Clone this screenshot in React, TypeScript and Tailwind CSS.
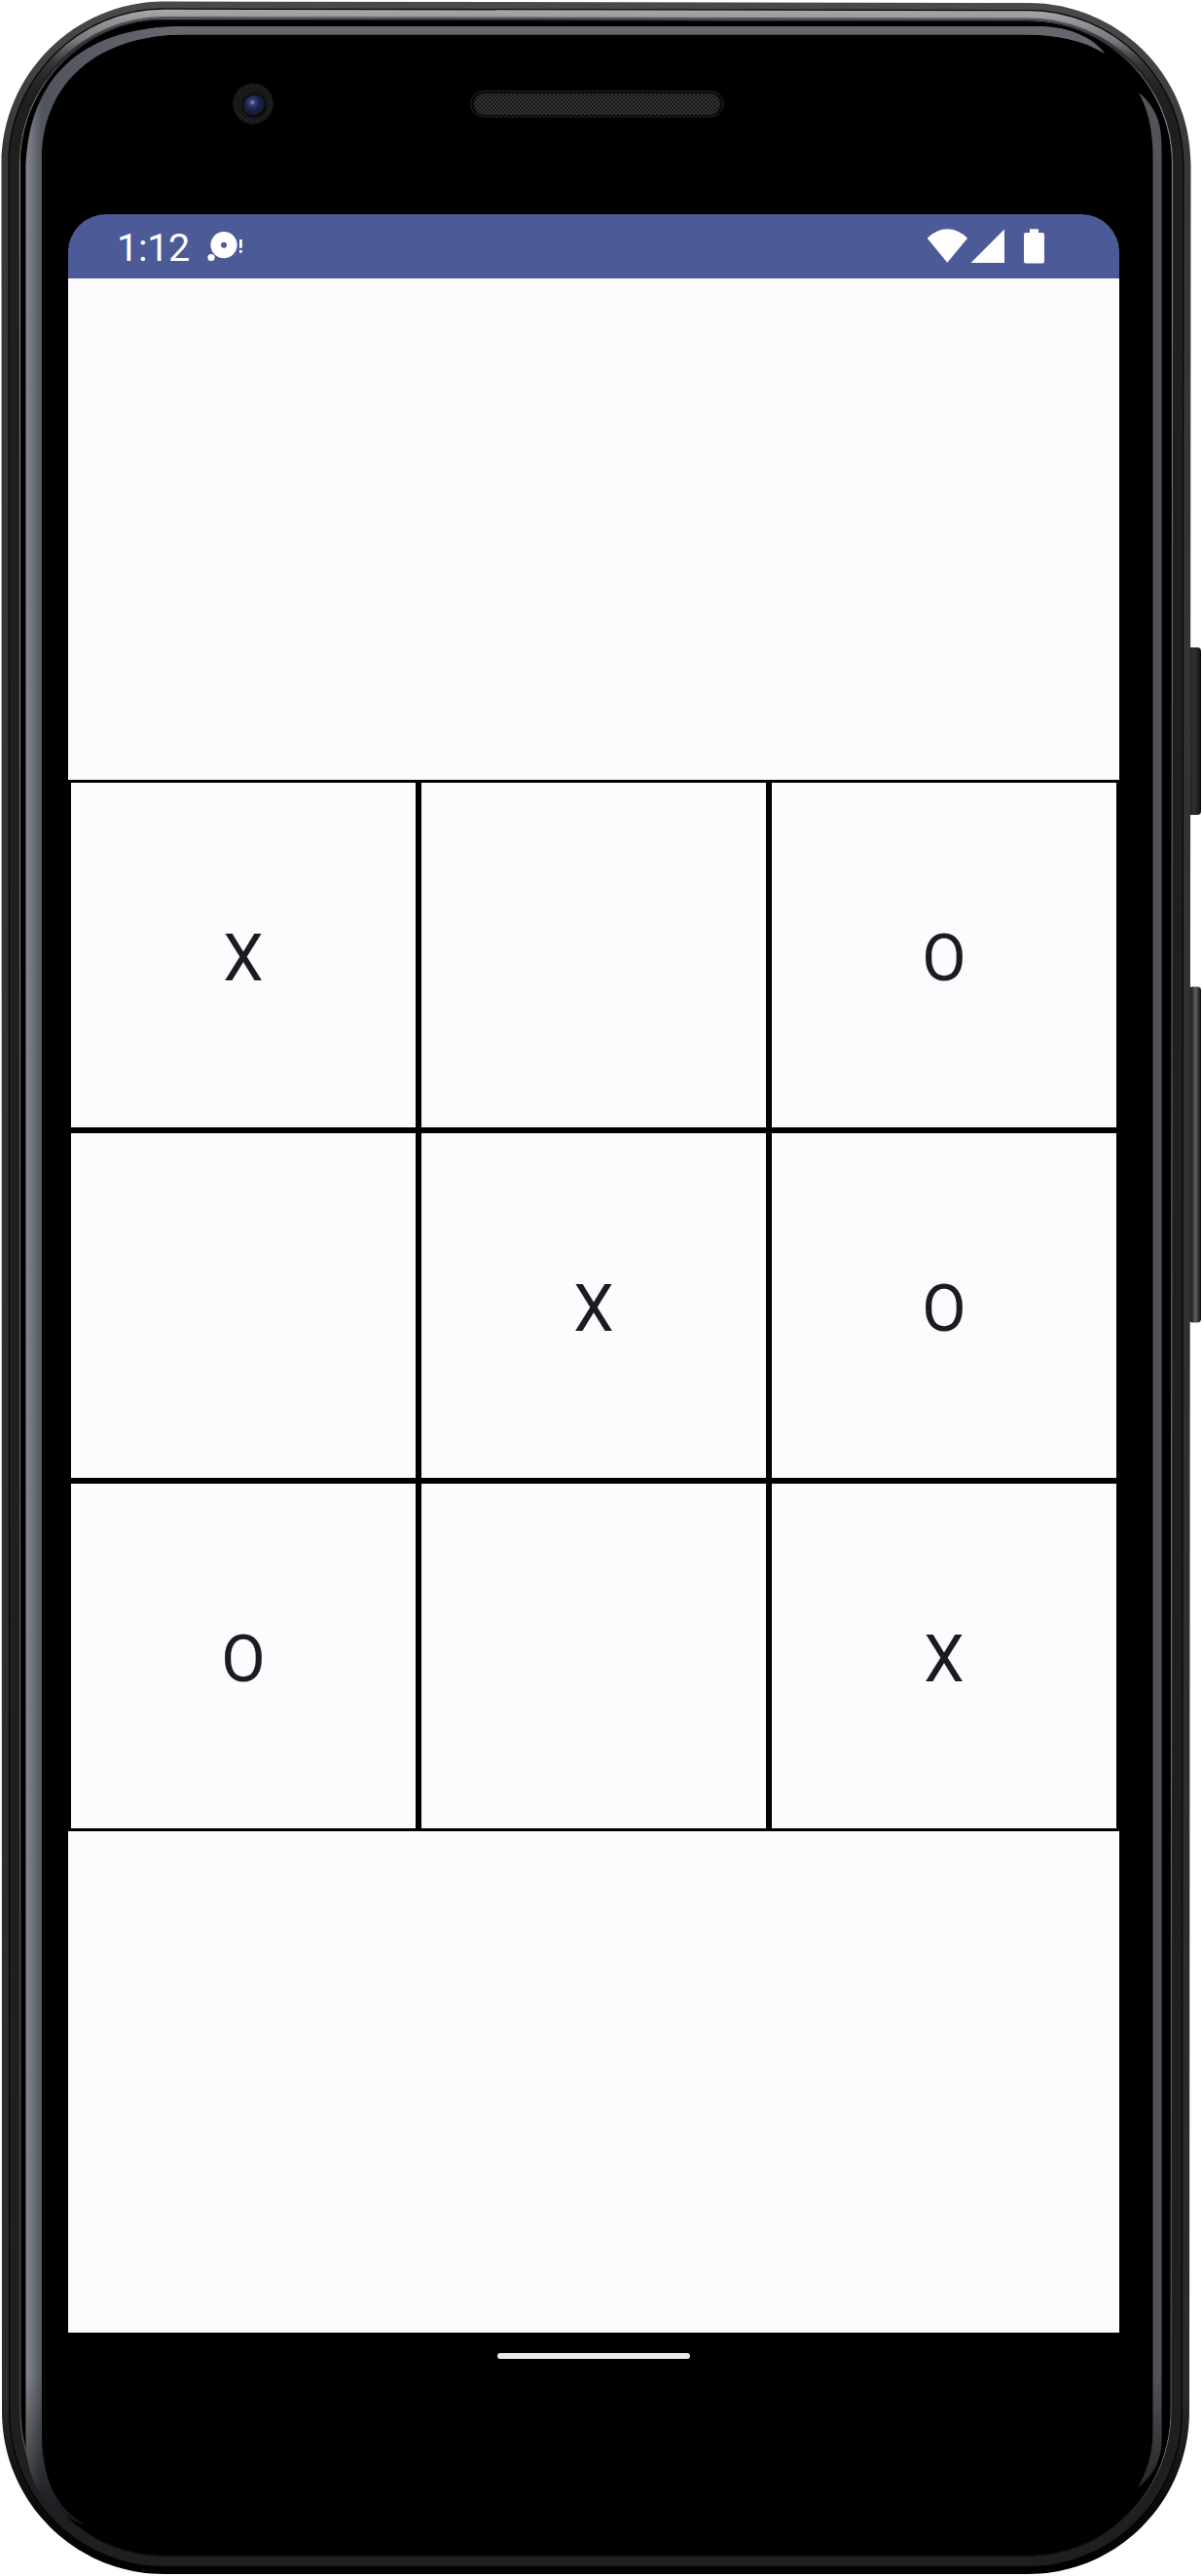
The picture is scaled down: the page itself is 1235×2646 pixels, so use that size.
const board = ["X", "", "O", "", "X", "O", "O", "", "X"];

// Outline of the phone body, shrunk by `i` pixels on each side.
function body(i: number) {
  const l = 1.5 + i;
  const r = 1223.5 - i;
  const t = 1.5 + i;
  const b = 2644 - i;
  const c = 167 - i;
  const k = c * 0.45;
  return [
    `M${l} ${t + c}`,
    `C${l} ${t + k} ${l + k} ${t} ${l + c} ${t}`,
    `L${r - c} ${t + 1.5}`,
    `C${r - k} ${t + 1.5} ${r} ${t + k} ${r} ${t + c}`,
    `L${r - 1.5} ${b - c}`,
    `C${r - 1.5} ${b - k} ${r - k} ${b} ${r - c} ${b}`,
    `L${l + c} ${b}`,
    `C${l + k} ${b} ${l + 0.5} ${b - k} ${l + 0.5} ${b - c}Z`,
  ].join("");
}

const leftGlass =
  "M26.5 180C26.5 85 78 27 190 27H1064C1096 27 1122 37 1135 55C1113 41 1085 35.5 1050 35.5H190C98 35.5 43 87 43 164V2500C43 2545 56 2575 86 2593C45 2577 26.5 2547 26.5 2505Z";
const rightGlass =
  "M1170 95C1188 110 1193.5 127 1193.5 150V2505C1193.5 2528 1184 2544 1169 2555C1180 2535 1184.5 2520 1184.5 2495V160C1184.5 135 1180 114 1170 95Z";

function Frame() {
  return (
    <svg className="absolute inset-0" width="1235" height="2646" viewBox="0 0 1235 2646" fill="none" aria-hidden="true">
      <defs>
        <linearGradient id="shell" gradientUnits="userSpaceOnUse" x1="0" y1="0" x2="0" y2="2646">
          <stop offset="0" stopColor="#4a4a4a" />
          <stop offset="0.06" stopColor="#393637" />
          <stop offset="0.93" stopColor="#2b292a" />
          <stop offset="0.975" stopColor="#080808" />
          <stop offset="1" stopColor="#000" />
        </linearGradient>
        <linearGradient id="silver" gradientUnits="userSpaceOnUse" x1="0" y1="8" x2="0" y2="105">
          <stop offset="0" stopColor="#a9abaf" />
          <stop offset="0.12" stopColor="#96989c" />
          <stop offset="0.35" stopColor="#77797d" />
          <stop offset="0.6" stopColor="#38393b" stopOpacity="0.8" />
          <stop offset="1" stopColor="#222" stopOpacity="0" />
        </linearGradient>
        <linearGradient id="silverLow" gradientUnits="userSpaceOnUse" x1="0" y1="15" x2="0" y2="90">
          <stop offset="0" stopColor="#56585b" />
          <stop offset="0.4" stopColor="#37383a" />
          <stop offset="1" stopColor="#222" stopOpacity="0" />
        </linearGradient>
        <linearGradient id="hairline" gradientUnits="userSpaceOnUse" x1="0" y1="0" x2="0" y2="2646">
          <stop offset="0.008" stopColor="#1b1b1c" />
          <stop offset="0.04" stopColor="#858688" />
          <stop offset="0.95" stopColor="#66676a" />
          <stop offset="0.985" stopColor="#111" />
        </linearGradient>
        <linearGradient id="leftBand" gradientUnits="userSpaceOnUse" x1="26" y1="0" x2="43" y2="0">
          <stop offset="0" stopColor="#85888c" />
          <stop offset="0.35" stopColor="#74787f" />
          <stop offset="1" stopColor="#50555e" />
        </linearGradient>
        <linearGradient id="topBand" gradientUnits="userSpaceOnUse" x1="50" y1="0" x2="170" y2="0">
          <stop offset="0" stopColor="#65676d" stopOpacity="0" />
          <stop offset="1" stopColor="#65676d" />
        </linearGradient>
        <linearGradient id="bandFade" gradientUnits="userSpaceOnUse" x1="0" y1="2440" x2="0" y2="2595">
          <stop offset="0" stopColor="#000" stopOpacity="0" />
          <stop offset="1" stopColor="#000" stopOpacity="0.75" />
        </linearGradient>
        <linearGradient id="key" x1="0" y1="0" x2="1" y2="0">
          <stop offset="0" stopColor="#111" />
          <stop offset="0.5" stopColor="#303030" />
          <stop offset="0.8" stopColor="#222" />
          <stop offset="1" stopColor="#080808" />
        </linearGradient>
        <linearGradient id="rocker" x1="0" y1="0" x2="1" y2="0">
          <stop offset="0" stopColor="#161616" />
          <stop offset="0.3" stopColor="#333" />
          <stop offset="0.55" stopColor="#606060" />
          <stop offset="0.8" stopColor="#333" />
          <stop offset="1" stopColor="#0a0a0a" />
        </linearGradient>
        <radialGradient id="lens" cx="0.4" cy="0.35" r="0.65">
          <stop offset="0" stopColor="#8790b8" />
          <stop offset="0.22" stopColor="#303d70" />
          <stop offset="0.55" stopColor="#172048" />
          <stop offset="0.8" stopColor="#182038" />
          <stop offset="1" stopColor="#07080f" />
        </radialGradient>
        <pattern id="mesh" width="4" height="4" patternUnits="userSpaceOnUse">
          <rect width="4" height="4" fill="#161717" />
          <rect width="1.4" height="1.4" x="0.3" y="0.3" fill="#505452" />
          <rect width="1.4" height="1.4" x="2.3" y="2.3" fill="#505452" />
        </pattern>
      </defs>

      <rect x="1219" y="665" width="15" height="172" rx="4" fill="url(#key)" />
      <rect x="1221.5" y="1013.5" width="12.5" height="345" rx="4" fill="url(#rocker)" />

      <path d={body(0)} fill="url(#shell)" />
      <path d={body(7)} fill="#060606" />
      <path d={body(8.3)} fill="#1f1f1f" />
      <path d={body(12.3)} stroke="url(#silver)" strokeWidth="8" />
      <path d={body(17)} stroke="url(#silverLow)" strokeWidth="3" />
      <path d={body(18.5)} fill="#000" />
      <path d={body(19)} stroke="url(#hairline)" strokeWidth="1.2" />
      <path d={body(19.6)} fill="#000" />

      <path d={leftGlass} fill="url(#leftBand)" />
      <path d="M26.5 180C26.5 85 78 27 190 27H1064C1096 27 1122 37 1135 55C1113 41 1085 35.5 1050 35.5H190C98 35.5 43 87 43 164V180Z" fill="url(#topBand)" />
      <path d={rightGlass} fill="#53545a" />
      <path d={leftGlass} fill="url(#bandFade)" />
      <path d={rightGlass} fill="url(#bandFade)" />

      <circle cx="260" cy="106.5" r="21" fill="#161616" />
      <circle cx="260" cy="106.5" r="18" stroke="#292929" strokeWidth="3" strokeDasharray="1 2" />
      <circle cx="260" cy="106.5" r="14" stroke="#262626" strokeWidth="2" strokeDasharray="1 2" />
      <circle cx="261.5" cy="108.5" r="12" fill="#050509" />
      <circle cx="261.5" cy="108.5" r="11" fill="url(#lens)" />

      <rect x="483.5" y="93.5" width="260" height="26.5" rx="13.2" fill="#090909" stroke="#25252a" />
      <rect x="487" y="96" width="253" height="22" rx="11" fill="url(#mesh)" />
    </svg>
  );
}

function StatusBar() {
  return (
    <header className="flex h-[66px] shrink-0 items-center justify-between rounded-t-[39px] bg-[#4c5b98] pr-[76px] pl-[50px] text-white">
      <div className="flex items-center gap-[18px]">
        <span className="pt-1 text-[39.5px] leading-[66px] tracking-[-0.3px]">1:12</span>
        <svg width="38" height="34" viewBox="213 236 38 34" fill="white" aria-hidden="true">
          <circle cx="230" cy="251.7" r="13.6" />
          <circle cx="230" cy="251.7" r="3" fill="#4c5b98" />
          <circle cx="217" cy="264.5" r="3.6" />
          <path d="M246 246h2.8v8.800h-2.8zM246 257h2.8v2.800h-2.8z" />
        </svg>
      </div>
      <svg width="122" height="36" viewBox="952 235 122 36" fill="white" aria-hidden="true">
        <path d="M952.7 244.8Q962 235.3 973.3 235.3Q985 235.3 994 244.8L973.3 269.7Z" />
        <path d="M1032 235.5V270H997.5Z" />
        <path d="M1058 235.3h9v3.7h4q2 0 2 2v27.500q0 2-2 2h-17q-2 0-2-2v-27.500q0-2 2-2h4z" />
      </svg>
    </header>
  );
}

export default function App() {
  return (
    <div className="relative h-[2646px] w-[1235px] overflow-hidden bg-white pt-[220px] pl-[70px] font-['Roboto',sans-serif]">
      <Frame />
      <div className="relative flex h-[2220px] w-[1080px] flex-col">
        <StatusBar />
        <main className="flex h-[2110px] items-center bg-[#fefbff]">
          <div className="grid w-full grid-cols-3">
            {board.map((mark, i) => (
              <div
                key={i}
                className="flex h-[360px] items-center justify-center border-3 border-black pt-2 text-[66px] leading-none text-[#1c1b1f]"
              >
                {mark}
              </div>
            ))}
          </div>
        </main>
        <div className="flex flex-1 justify-center pt-[21px]">
          <div className="h-[6px] w-[198px] rounded-full bg-[#ebebeb]" />
        </div>
      </div>
    </div>
  );
}
